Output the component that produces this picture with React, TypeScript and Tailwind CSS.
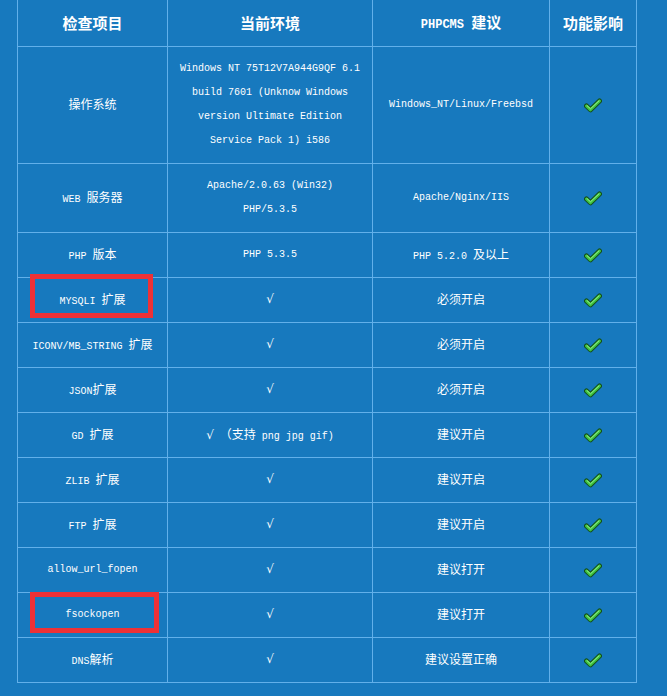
import { Fragment } from "react";

const rows: { name: string; env: string[]; advice: string; h: string }[] = [
  { name: "操作系统", env: ["Windows NT 75T12V7A944G9QF 6.1", "build 7601 (Unknow Windows", "version Ultimate Edition", "Service Pack 1) i586"], advice: "Windows_NT/Linux/Freebsd", h: "h-[117px]" },
  { name: "WEB 服务器", env: ["Apache/2.0.63 (Win32)", "PHP/5.3.5"], advice: "Apache/Nginx/IIS", h: "h-[69px]" },
  { name: "PHP 版本", env: ["PHP 5.3.5"], advice: "PHP 5.2.0 及以上", h: "h-[45px]" },
  { name: "MYSQLI 扩展", env: ["√"], advice: "必须开启", h: "h-[45px]" },
  { name: "ICONV/MB_STRING 扩展", env: ["√"], advice: "必须开启", h: "h-[45px]" },
  { name: "JSON扩展", env: ["√"], advice: "必须开启", h: "h-[45px]" },
  { name: "GD 扩展", env: ["√ （支持 png jpg gif)"], advice: "建议开启", h: "h-[45px]" },
  { name: "ZLIB 扩展", env: ["√"], advice: "建议开启", h: "h-[45px]" },
  { name: "FTP 扩展", env: ["√"], advice: "建议开启", h: "h-[45px]" },
  { name: "allow_url_fopen", env: ["√"], advice: "建议打开", h: "h-[45px]" },
  { name: "fsockopen", env: ["√"], advice: "建议打开", h: "h-[45px]" },
  { name: "DNS解析", env: ["√"], advice: "建议设置正确", h: "h-[45px]" },
];

// CJK runs get a larger size than the mono latin text, like SimSun does
function Mixed({ text }: { text: string }) {
  const parts = text.split(/([\u3000-\u9fff\uff00-\uffef]+|√)/);
  return (
    <>
      {parts.map((p, i) =>
        p === "√" ? (
          <span key={i} className="text-[12px] italic font-['DejaVu_Sans',sans-serif]">{p}</span>
        ) : /[\u3000-\u9fff\uff00-\uffef]/.test(p) ? (
          <span key={i} className="text-[12px] font-['Noto_Sans_CJK_SC',sans-serif]">{p}</span>
        ) : (
          <span key={i}>{p}</span>
        )
      )}
    </>
  );
}

function Check() {
  return (
    <svg width="18" height="15" viewBox="0 0 18 15">
      <path d="M2.5 8 L6.5 11.8 L15.5 3" fill="none" stroke="#14501a" strokeWidth="5" strokeLinecap="round" strokeLinejoin="round" />
      <path d="M2.5 8 L6.5 11.8 L15.5 3" fill="none" stroke="#3fc443" strokeWidth="3" strokeLinecap="round" strokeLinejoin="round" />
      <path d="M3 7.6 L6.5 10.8 L15 2.8" fill="none" stroke="#9cf08e" strokeWidth="1" strokeLinecap="round" strokeLinejoin="round" />
    </svg>
  );
}

const cell = "flex flex-col items-center justify-center border-r border-b border-[#62b0ea] text-center";

export default function App() {
  return (
    <div className="relative w-[667px] h-[696px] overflow-hidden bg-[#1779be] text-white font-['Liberation_Mono','Noto_Sans_CJK_SC',monospace] text-[10px] leading-[24px]">
      <div className="ml-[17px] grid w-[620px] grid-cols-[150px_205px_177px_87px] border-l border-[#62b0ea]">
        <div className={`${cell} h-[47px] text-[15px] font-bold font-['Noto_Sans_CJK_SC',sans-serif]`}>检查项目</div>
        <div className={`${cell} h-[47px] text-[15px] font-bold font-['Noto_Sans_CJK_SC',sans-serif]`}>当前环境</div>
        <div className={`${cell} h-[47px] text-[15px] font-bold`}>
          <div>
            <span className="text-[12px] font-['Liberation_Mono',monospace]">PHPCMS </span>
            <span className="font-['Noto_Sans_CJK_SC',sans-serif]">建议</span>
          </div>
        </div>
        <div className={`${cell} h-[47px] text-[15px] font-bold font-['Noto_Sans_CJK_SC',sans-serif]`}>功能影响</div>
        {rows.map((r) => (
          <Fragment key={r.name}>
            <div className={`${cell} ${r.h}`}>
              <div><Mixed text={r.name} /></div>
            </div>
            <div className={`${cell} ${r.h}`}>
              {r.env.map((line) => (
                <div key={line} className="whitespace-pre"><Mixed text={line} /></div>
              ))}
            </div>
            <div className={`${cell} ${r.h}`}>
              <div><Mixed text={r.advice} /></div>
            </div>
            <div className={`${cell} ${r.h}`}>
              <Check />
            </div>
          </Fragment>
        ))}
      </div>

      {/* red highlight boxes */}
      <div className="absolute left-[30px] top-[274px] h-[44px] w-[123px] border-[5px] border-[#ee3136]" />
      <div className="absolute left-[30px] top-[592px] h-[41px] w-[129px] border-[5px] border-[#ee3136]" />
    </div>
  );
}
